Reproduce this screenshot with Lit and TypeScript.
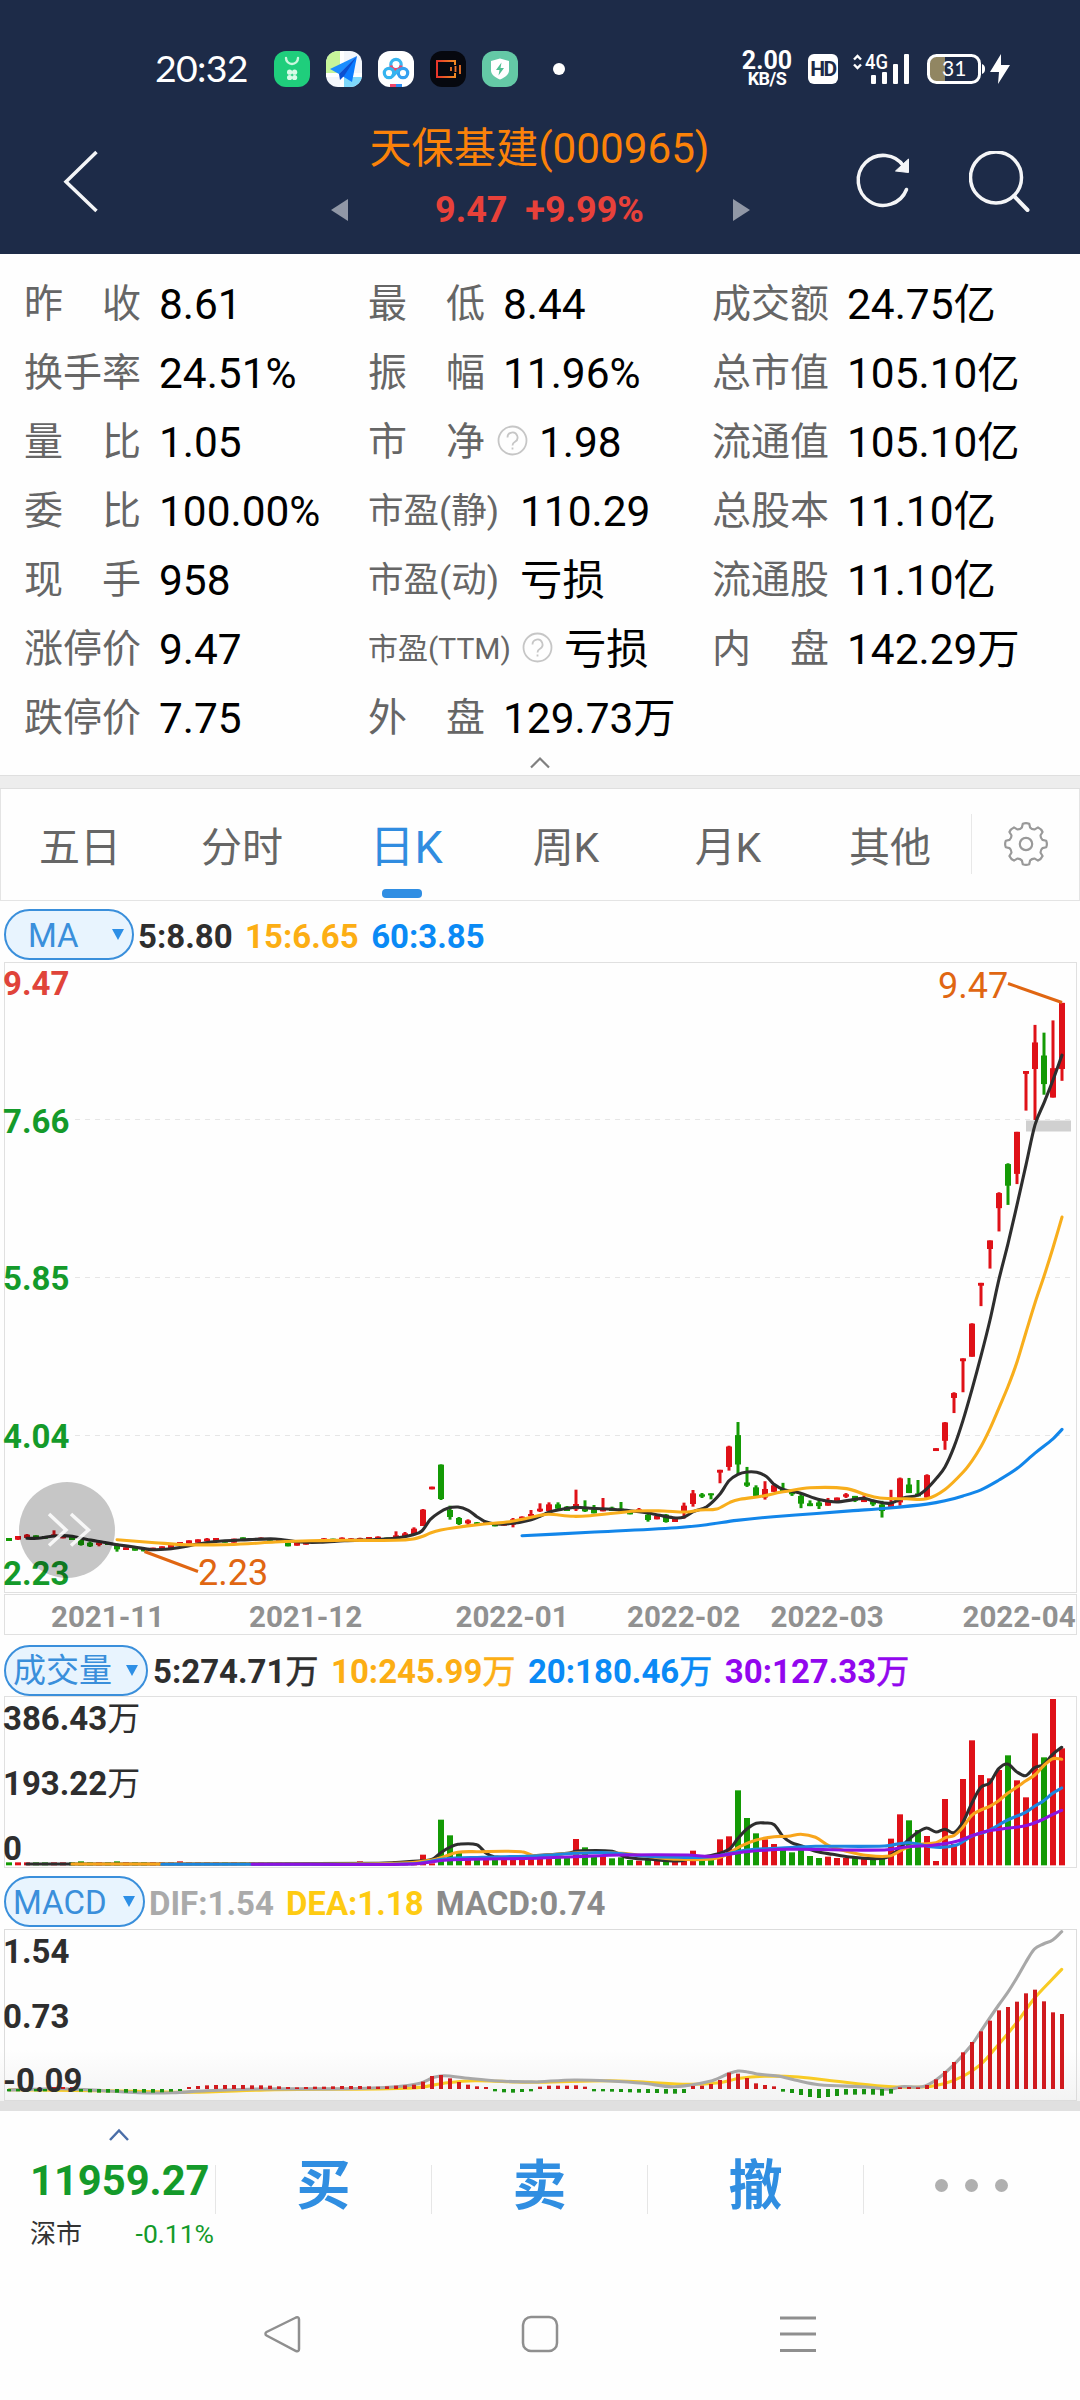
import { LitElement, html, svg, css, nothing } from "lit";
import { customElement, property } from "lit/decorators.js";
import { classMap } from "lit/directives/class-map.js";

type Pt = [number, number];
type Candle = [number, number, number, number, number]; // direction, high, body top, body bottom, low

const UP = "#df1118";
const DOWN = "#149a05";
const X0 = 9;
const STEP = 9;
const xAt = (i: number) => X0 + STEP * i;

/* Maps a run of points from a sub-grid into chart space. */
const grid = (ox: number, oy: number, sx: number, sy: number, pts: number[][]): Pt[] =>
  pts.map(([u, v]) => [ox + u / sx, oy + v / sy]);

const rows = (oy: number, sy: number, list: Candle[]): Candle[] =>
  list.map(([d, ...v]) => [d, ...v.map((n) => oy + n / sy)] as Candle);

const curve = (p: Pt[]): string => {
  let d = `M${p[0][0].toFixed(1)} ${p[0][1].toFixed(1)}`;
  for (let i = 0; i < p.length - 1; i++) {
    const a = p[i - 1] ?? p[i], b = p[i], c = p[i + 1], e = p[i + 2] ?? c;
    const k = (c[0] - b[0]) / 3;
    const mb = i > 0 ? (c[1] - a[1]) / (c[0] - a[0]) : (c[1] - b[1]) / (c[0] - b[0]);
    const mc = e !== c ? (e[1] - b[1]) / (e[0] - b[0]) : (c[1] - b[1]) / (c[0] - b[0]);
    d += `C${(b[0] + k).toFixed(1)} ${(b[1] + mb * k).toFixed(1)} ${(c[0] - k).toFixed(1)} ${(c[1] - mc * k).toFixed(1)} ${c[0].toFixed(1)} ${c[1].toFixed(1)}`;
  }
  return d;
};

const CANDLES: Candle[] = [
  ...rows(1380, 3, [
    [0, 474, 474, 483, 483], [1, 468, 468, 479, 480], [1, 462, 464, 474, 474], [0, 466, 466, 474, 474],
    [0, 468, 468, 476, 476], [1, 451, 463, 471, 471], [1, 467, 467, 475, 475], [0, 470, 470, 480, 480],
    [0, 478, 480, 495, 497], [0, 484, 488, 499, 501], [1, 484, 487, 495, 499], [0, 486, 486, 495, 495],
    [0, 490, 494, 508, 515], [1, 502, 502, 510, 510], [0, 504, 504, 512, 512], [0, 505, 505, 514, 514],
    [1, 503, 503, 510, 510], [1, 499, 499, 507, 507], [1, 495, 495, 504, 504], [1, 486, 486, 496, 496],
    [1, 481, 481, 491, 491], [1, 478, 478, 488, 488], [1, 474, 476, 484, 484], [1, 474, 474, 484, 484],
    [0, 480, 480, 488, 488], [1, 476, 476, 488, 488], [0, 472, 472, 480, 480], [1, 475, 475, 482, 482],
    [1, 472, 473, 480, 480], [0, 475, 475, 482, 482], [1, 477, 477, 484, 484], [0, 486, 488, 499, 499],
    [1, 488, 488, 497, 497], [1, 485, 485, 494, 494], [1, 480, 480, 488, 488], [1, 474, 475, 482, 482],
    [0, 476, 476, 484, 484], [1, 472, 473, 482, 482], [1, 474, 475, 482, 482], [1, 473, 474, 481, 481],
    [1, 471, 471, 480, 480], [1, 469, 470, 478, 478], [0, 473, 473, 481, 481], [1, 454, 466, 476, 476],
    [1, 456, 460, 469, 470], [1, 442, 446, 463, 464], [1, 387, 389, 438, 438], [1, 320, 320, 328, 328],
    [0, 253, 254, 357, 360], [0, 377, 390, 411, 419], [0, 411, 414, 432, 435], [1, 418, 421, 430, 434],
    [0, 426, 427, 437, 437], [1, 424, 425, 433, 433],
  ]),
  ...rows(1440, 3, [
    [0, 250, 252, 259, 259], [1, 248, 250, 257, 257], [1, 234, 238, 254, 262], [1, 229, 230, 240, 242],
    [1, 210, 222, 229, 229], [1, 190, 206, 214, 216], [1, 187, 193, 213, 214], [0, 187, 193, 206, 208],
    [0, 198, 200, 213, 213], [1, 149, 192, 208, 213], [0, 181, 207, 214, 216], [0, 195, 208, 220, 220],
    [1, 174, 208, 214, 214], [0, 200, 203, 213, 213], [0, 186, 206, 214, 214], [0, 210, 213, 223, 223],
    [1, 204, 208, 219, 219], [0, 222, 224, 240, 245], [1, 228, 228, 238, 238], [0, 222, 224, 246, 248],
    [1, 232, 234, 246, 246], [1, 188, 197, 219, 236], [1, 150, 160, 192, 200], [0, 159, 163, 170, 174],
    [0, 160, 160, 166, 178],
  ]),
  ...rows(960, 2.45, [
    [1, 1249, 1249, 1256, 1282], [1, 1190, 1192, 1242, 1251], [0, 1132, 1164, 1236, 1260],
    [0, 1242, 1280, 1288, 1291], [0, 1287, 1292, 1313, 1313], [1, 1277, 1296, 1317, 1322],
    [1, 1285, 1287, 1303, 1303], [0, 1281, 1296, 1303, 1303], [0, 1298, 1303, 1309, 1313],
    [0, 1308, 1313, 1332, 1343], [0, 1324, 1331, 1338, 1338], [0, 1323, 1329, 1338, 1345],
    [1, 1318, 1324, 1337, 1337], [1, 1317, 1317, 1327, 1327], [1, 1306, 1309, 1315, 1318],
    [0, 1313, 1313, 1325, 1328], [1, 1312, 1320, 1328, 1328], [0, 1323, 1326, 1334, 1338],
    [0, 1325, 1334, 1350, 1366], [1, 1298, 1328, 1340, 1341], [1, 1268, 1270, 1329, 1337],
    [0, 1269, 1285, 1306, 1306], [0, 1274, 1307, 1314, 1314], [1, 1260, 1262, 1317, 1320],
    [1, 1196, 1196, 1203, 1203], [1, 1132, 1133, 1178, 1200], [1, 1059, 1061, 1073, 1110],
    [1, 976, 976, 983, 1059], [1, 890, 891, 972, 972], [1, 791, 791, 798, 848],
    [1, 687, 687, 708, 756], [1, 569, 571, 608, 665], [0, 498, 500, 553, 600],
    [1, 421, 421, 524, 549], [1, 272, 272, 279, 369], [1, 159, 202, 267, 392],
    [0, 178, 234, 304, 330], [1, 148, 265, 337, 337], [1, 105, 105, 267, 296],
  ]),
];

const SX = 2.904;

const MA5: Pt[] = [
  ...grid(0, 1380, SX, 3, [[78, 475], [110, 475], [140, 470], [175, 467], [210, 469], [250, 478], [300, 487], [340, 494], [390, 501], [440, 509], [490, 507], [530, 501], [570, 493], [620, 485], [700, 480], [800, 477], [870, 486], [930, 487], [1000, 482], [1080, 479], [1150, 474], [1200, 464], [1225, 453], [1250, 418], [1275, 398], [1300, 385], [1330, 381], [1360, 391], [1385, 410], [1410, 425], [1440, 432], [1490, 430], [1540, 420]]),
  ...grid(490, 1440, 3, 3, [[150, 229], [177, 217], [204, 210], [258, 202], [300, 205], [366, 208], [420, 212], [470, 218], [510, 226], [550, 233], [580, 232], [610, 215], [650, 200], [690, 162], [717, 122], [744, 103], [771, 96], [800, 97], [830, 110]]),
  ...grid(720, 960, 3, 2.45, [[160, 1283], [190, 1297], [240, 1306], [297, 1322], [350, 1328], [400, 1322], [432, 1319], [460, 1325], [510, 1331], [550, 1318], [594, 1311], [621, 1295], [650, 1269], [675, 1242], [702, 1193], [729, 1128], [756, 1052], [783, 970], [810, 882], [837, 782], [864, 695], [891, 600], [918, 502], [945, 404], [972, 350], [999, 294], [1026, 233]]),
];
const MA15: Pt[] = [
  ...grid(0, 1380, SX, 3, [[340, 479], [450, 488], [540, 494], [650, 494], [720, 491], [800, 486], [900, 482], [1000, 481], [1150, 481], [1200, 477], [1230, 468], [1250, 459], [1280, 450], [1320, 443], [1400, 433], [1480, 425], [1530, 415]]),
  ...grid(490, 1440, 3, 3, [[150, 226], [177, 223], [250, 229], [300, 227], [440, 213], [520, 213], [590, 216], [630, 210], [680, 207], [720, 187], [750, 178], [820, 168], [870, 157]]),
  ...grid(720, 960, 3, 2.45, [[190, 1303], [270, 1293], [380, 1295], [440, 1311], [480, 1318], [560, 1320], [620, 1320], [675, 1297], [729, 1255], [756, 1227], [783, 1192], [810, 1148], [837, 1097], [864, 1045], [891, 985], [918, 912], [945, 840], [972, 775], [999, 705], [1026, 630]]),
];
const MA60: Pt[] = [
  ...grid(490, 1440, 3, 3, [[96, 287], [300, 277], [560, 263], [650, 254]]),
  ...grid(720, 960, 3, 2.45, [[50, 1373], [160, 1364], [290, 1356], [400, 1349], [500, 1343], [620, 1333], [675, 1325], [729, 1313], [783, 1298], [837, 1274], [891, 1246], [945, 1208], [999, 1173], [1026, 1150]]),
];

/* Volume bar tops, one per candle; the first 46 sessions are nearly flat. */
const VOLUME: number[] = [
  ...Array.from({ length: 46 }, (_, i) => ([8, 12, 19, 39].includes(i) ? 694 : i > 42 ? 694 : 697)),
  674, 700, 569, 616, 664, 682, 690, 686, 690, 688, 684, 684, 684, 682, 684, 682, 682, 627, 652, 678, 678, 685, 682,
  690, 692, 685, 690, 690, 690, 685, 662, 687, 685, 628, 619, 481, 564, 610, 628, 642, 660, 667, 660, 678, 684, 680,
  684, 684, 684, 684, 684, 684, 626, 553, 571, 600, 618, 693, 507, 642, 447, 331, 435, 445, 420, 376, 451, 502, 310,
  382, 207, 355,
];
const two = (left: number[][], right: number[][]): Pt[] => [
  ...grid(0, 1630, SX, 3, left), ...grid(540, 1630, SX, 3, right),
];
const V5 = two(
  [[78, 702], [500, 702], [1100, 700], [1200, 694], [1255, 688], [1280, 668], [1310, 650], [1330, 643], [1385, 644], [1410, 668], [1435, 680], [1500, 682]],
  [[0, 676], [80, 670], [110, 663], [210, 664], [250, 682], [320, 688], [400, 693], [440, 685], [500, 676], [550, 657], [575, 625], [600, 598], [628, 580], [653, 579], [680, 584], [706, 620], [730, 638], [760, 648], [800, 664], [850, 673], [900, 681], [1000, 684], [1040, 660], [1065, 634], [1090, 612], [1122, 594], [1150, 606], [1176, 598], [1202, 608], [1228, 577], [1254, 520], [1280, 472], [1306, 459], [1332, 416], [1358, 402], [1384, 425], [1410, 437], [1436, 413], [1462, 404], [1489, 373], [1515, 352]]);
const V10 = two(
  [[209, 702], [700, 702], [1150, 700], [1255, 690], [1330, 667], [1385, 665], [1515, 665], [1550, 677]],
  [[20, 676], [110, 668], [240, 670], [320, 680], [400, 688], [500, 687], [540, 675], [580, 650], [628, 630], [680, 620], [720, 619], [757, 613], [800, 622], [840, 648], [890, 664], [940, 675], [1015, 678], [1060, 655], [1100, 643], [1150, 638], [1180, 622], [1202, 617], [1228, 592], [1254, 556], [1280, 540], [1306, 529], [1332, 512], [1358, 490], [1384, 472], [1410, 453], [1436, 436], [1462, 408], [1489, 386], [1515, 388]]);
const V20 = two(
  [[470, 703], [900, 703], [1200, 701], [1290, 687], [1400, 682], [1568, 677]],
  [[100, 670], [200, 668], [300, 678], [400, 682], [500, 680], [600, 660], [700, 654], [800, 649], [1000, 648], [1070, 638], [1150, 652], [1210, 645], [1254, 618], [1300, 603], [1358, 570], [1410, 547], [1436, 529], [1462, 513], [1489, 490], [1515, 474]]);
const V30 = two(
  [[732, 703], [900, 703], [1200, 702], [1300, 690], [1560, 685]],
  [[0, 684], [100, 680], [240, 675], [430, 675], [500, 679], [600, 665], [720, 658], [1000, 660], [1070, 650], [1140, 646], [1210, 634], [1254, 617], [1300, 603], [1340, 597], [1410, 587], [1450, 573], [1489, 553], [1515, 541]]);

/* MACD histogram tips against the zero line at 1377. */
const ZERO = 1377;
const HIST: number[] = [
  1384, 1384, 1384, 1384, 1384, 1371, 1371, 1371, 1385, 1387, 1388, 1388, 1388, 1388, 1388, 1388, 1388, 1387, 1385,
  1383, 1371, 1368, 1366, 1365, 1365, 1365, 1365, 1366, 1366, 1367, 1369, 1371, 1372, 1371, 1370, 1370, 1369, 1368,
  1368, 1368, 1369, 1370, 1369, 1367, 1366, 1364, 1355, 1338, 1335, 1345, 1356, 1364, 1369, 1371, 1384, 1387, 1388,
  1386, 1384, 1370, 1367, 1367, 1367, 1366, 1370, 1384, 1384, 1385, 1386, 1387, 1388, 1389, 1389, 1391, 1391, 1389,
  1368, 1367, 1362, 1350, 1328, 1331, 1344, 1360, 1365, 1369, 1385, 1389, 1395, 1401, 1404, 1401, 1398, 1394, 1394,
  1393, 1394, 1397, 1391, 1372, 1371, 1372, 1365, 1348, 1323, 1296, 1267, 1236, 1204, 1172, 1141, 1131, 1115, 1090,
  1079, 1114, 1147, 1152,
];
const DIF = two(
  [[26, 1380], [180, 1376], [300, 1382], [400, 1388], [500, 1388], [600, 1382], [750, 1377], [1000, 1376], [1150, 1370], [1220, 1360], [1260, 1342], [1290, 1337], [1350, 1344], [1450, 1353], [1560, 1356]],
  [[0, 1355], [100, 1350], [200, 1353], [300, 1360], [390, 1370], [500, 1352], [550, 1330], [575, 1323], [600, 1325], [630, 1332], [690, 1338], [740, 1350], [810, 1364], [950, 1371], [1015, 1378], [1050, 1370], [1110, 1370], [1150, 1350], [1200, 1306], [1254, 1244], [1280, 1204], [1332, 1125], [1358, 1088], [1384, 1045], [1410, 998], [1436, 957], [1462, 942], [1489, 930], [1515, 905]]);
const DEA = two(
  [[26, 1379], [400, 1384], [550, 1387], [800, 1379], [1200, 1374], [1300, 1358], [1380, 1352], [1500, 1356]],
  [[0, 1357], [200, 1352], [300, 1356], [430, 1363], [520, 1358], [580, 1345], [650, 1339], [740, 1340], [830, 1350], [1000, 1369], [1110, 1371], [1170, 1362], [1230, 1338], [1280, 1303], [1320, 1258], [1384, 1178], [1436, 1105], [1489, 1046], [1515, 1018]]);

const line = (p: Pt[], stroke: string) =>
  svg`<path d=${curve(p)} fill="none" stroke=${stroke} stroke-width="3.1" stroke-linecap="round" stroke-linejoin="round"/>`;

interface Stat { label: string; value: string; size?: "mid" | "small"; help?: boolean }

const STATS: (Stat | null)[] = [
  { label: "昨　收", value: "8.61" }, { label: "最　低", value: "8.44" }, { label: "成交额", value: "24.75亿" },
  { label: "换手率", value: "24.51%" }, { label: "振　幅", value: "11.96%" }, { label: "总市值", value: "105.10亿" },
  { label: "量　比", value: "1.05" }, { label: "市　净", value: "1.98", help: true }, { label: "流通值", value: "105.10亿" },
  { label: "委　比", value: "100.00%" }, { label: "市盈(静)", value: "110.29", size: "mid" }, { label: "总股本", value: "11.10亿" },
  { label: "现　手", value: "958" }, { label: "市盈(动)", value: "亏损", size: "mid" }, { label: "流通股", value: "11.10亿" },
  { label: "涨停价", value: "9.47" }, { label: "市盈(TTM)", value: "亏损", size: "small", help: true }, { label: "内　盘", value: "142.29万" },
  { label: "跌停价", value: "7.75" }, { label: "外　盘", value: "129.73万" }, null,
];

const FONT = css`Roboto, "Noto Sans CJK SC", sans-serif`;

@customElement("status-bar")
class StatusBar extends LitElement {
  static styles = css`
    :host { display: flex; align-items: center; height: 36px; padding: 51px 69px 0 155px; color: #fff; font-family: Lato, sans-serif; }
    .time { width: 119px; font-size: 37.500px; line-height: 34px; padding-bottom: 2px; white-space: nowrap; letter-spacing: -0.700px; }
    .apps { display: flex; gap: 16px; }
    .dot { width: 12px; height: 12px; border-radius: 50%; background: #fff; margin-left: 35px; }
    .speed { margin-left: auto; width: 54px; text-align: center; font-family: Roboto, sans-serif; font-weight: 700; }
    .rate { font-size: 25px; line-height: 19px; }
    .unit { font-size: 18px; line-height: 17px; letter-spacing: -0.500px; }
    .hd { width: 30px; height: 30px; border-radius: 6px; background: #fff; color: #1d2b48; margin-left: 14px; display: flex; align-items: center; justify-content: center; font: 700 21px/30px Roboto, sans-serif; letter-spacing: -1.500px; }
    .signal { margin-left: 14px; overflow: visible; }
    .battery { margin-left: 16px; overflow: visible; }
    svg { display: block; }
  `;
  render() {
    return html`
      <span class="time">20:32</span>
      <div class="apps">
        <svg width="36" height="36" viewBox="0 0 36 36"><rect width="36" height="36" rx="12" fill="#1fce7c"/><path d="M12 7a6 6 0 0 0 12 0" fill="none" stroke="#c9f7de" stroke-width="2.4" stroke-linecap="round"/><g fill="#d8fbe8"><circle cx="15.6" cy="21.2" r="2.6"/><circle cx="20.6" cy="21.2" r="2.6"/><circle cx="15.6" cy="26.5" r="2.6"/><circle cx="20.6" cy="26.5" r="2.6"/></g></svg>
        <svg width="36" height="36" viewBox="0 0 36 36"><defs><clipPath id="m"><rect width="36" height="36" rx="12"/></clipPath></defs><g clip-path="url(#m)"><rect width="36" height="36" fill="#f3f6fb"/><path d="M0 0h14v22H0z" fill="#c6f59a"/><path d="M18 26h18v10H18z" fill="#7ed8fb"/><path d="M14 0h4v36h-4zM0 22h36v4H0z" fill="#fff"/></g><path d="M31 5 4 18l9 5z" fill="#1b8dff"/><path d="M31 5 13 23l13 8z" fill="#0a7bff"/><path d="M31 5 13 23l1 6 4-4z" fill="#0b4fd0"/></svg>
        <svg width="36" height="36" viewBox="0 0 36 36"><rect width="36" height="36" rx="12" fill="#fff"/><g fill="none" stroke-width="3.2"><circle cx="18" cy="13.5" r="5.2" stroke="#39b6f0"/><path d="M12.9 14.5a5.2 5.2 0 0 0 10.200 0" stroke="#f0466a"/><circle cx="11" cy="22" r="4.700" stroke="#35b4ef"/><circle cx="25" cy="22" r="4.700" stroke="#35a0f0"/><path d="M14.500 25 21 18.500" stroke="#35b4ef"/></g><path d="M12 33h6v3h-6z" fill="#f2466b"/><path d="M18 33h6v3h-6z" fill="#2b8cf0"/></svg>
        <svg width="36" height="36" viewBox="0 0 36 36"><defs><linearGradient id="o"><stop stop-color="#e8352b"/><stop offset="1" stop-color="#f08a22"/></linearGradient></defs><rect width="36" height="36" rx="12" fill="#06080f"/><path d="M25 14v-4H7v16h18v-4" fill="none" stroke="url(#o)" stroke-width="2"/><path d="M21 16v4M25.500 15v6M30 14v9" stroke="#f0742a" stroke-width="1.800"/></svg>
        <svg width="36" height="36" viewBox="0 0 36 36"><rect width="36" height="36" rx="12" fill="#64c9a6"/><path d="M18 7.500 27 10v9.500c0 4-4 7-9 9-5-2-9-5-9-9V10z" fill="#fff"/><path d="M19.500 11.500 14 19h3.500l-1 5.500L22 17h-3.500z" fill="#4fc093"/></svg>
      </div>
      <span class="dot"></span>
      <div class="speed"><div class="rate">2.00</div><div class="unit">KB/S</div></div>
      <span class="hd">HD</span>
      <svg class="signal" width="59" height="30" viewBox="0 0 59 30">
        <path d="M2 5.500 5.500 2 9 5.500M2 10.500 5.500 14 9 10.500" fill="none" stroke="#fff" stroke-width="2.400"/>
        <text x="13" y="15" textLength="23" lengthAdjust="spacingAndGlyphs" font-family="Roboto" font-size="20" font-weight="500" fill="#fff">4G</text>
        <g fill="#fff"><rect x="19" y="21" width="5" height="9" rx="1"/><rect x="30" y="18" width="5" height="12" rx="1"/><rect x="41" y="10" width="5" height="20" rx="1"/><rect x="52" y="0" width="5" height="30" rx="1"/></g>
      </svg>
      <svg class="battery" width="84" height="30" viewBox="0 0 84 30">
        <path d="M9 2.500H18V27.500H9a6 6 0 0 1-6-6v-13a6 6 0 0 1 6-6z" fill="#918662"/>
        <rect x="1.500" y="1.500" width="51" height="27" rx="8" fill="none" stroke="#fff" stroke-width="3"/>
        <path d="M55 10c2 1 3 2 3 5s-1 4-3 5z" fill="#fff"/>
        <text x="15" y="22" font-family="Lato" font-weight="400" font-size="21" fill="#fff">31</text>
        <path d="M74 0 63 18h9l-1 12 12-19h-9z" fill="#fff"/>
      </svg>`;
  }
}

@customElement("indicator-pill")
class IndicatorPill extends LitElement {
  @property() name = "";
  static styles = css`
    :host { display: flex; align-items: center; justify-content: space-between; box-sizing: border-box; height: 51px; border: 2.500px solid #3a8fdb; border-radius: 26px; background: #e8f4fe; color: #3a8fdb; font: 400 33px/46px ${FONT}; padding: 0 8px 0 7px; white-space: nowrap; }
    .text { padding-top: 2px; }
    .tri { width: 0; height: 0; border: 6.500px solid transparent; border-top: 11px solid #2d8fe6; border-bottom: 0; }
  `;
  render() { return html`<span class="text">${this.name}</span><span class="tri"></span>`; }
}

@customElement("app-root")
class AppRoot extends LitElement {
  static styles = css`
    :host { display: block; width: 1080px; height: 2400px; overflow: hidden; background: #fefefe; font-family: ${FONT}; color: #000; }
    svg { display: block; }
    .header { height: 254px; background: #1d2b48; }
    .title-bar { display: grid; grid-template-columns: 331px 419px 330px; height: 167px; }
    .back { padding: 63px 0 0 63px; }
    .name { text-align: center; color: #fb8209; font-size: 42.200px; line-height: 50px; padding: 37px 2px 0 0; margin-bottom: -1px; white-space: nowrap; }
    .quote { display: flex; align-items: center; justify-content: space-between; padding-top: 16px; height: 42px; padding-bottom: 6px; }
    .price { color: #e8413a; font-weight: 700; font-size: 36px; white-space: pre; padding-right: 2px; }
    .actions { display: flex; padding: 64px 0 0 105px; gap: 58px; }
    .stats { height: 483px; padding-top: 16px; display: grid; grid-template-columns: 344px 344px auto; grid-auto-rows: 69px; padding-left: 24px; }
    .stat { display: flex; align-items: center; white-space: nowrap; font-size: 42.400px; line-height: 50px; }
    .label { color: #666; font-size: 39px; width: 117px; margin-right: 18px; padding-bottom: 1px; }
    .label.mid { font-size: 35.500px; width: 134px; }
    .label.small { font-size: 30px; width: auto; margin-right: 11px; }
    .label.helped { margin-right: 12px; }
    .help { margin: -5px 11px 0 0; }
    .collapse { height: 22px; display: flex; justify-content: center; padding-top: 3px; box-sizing: border-box; }
    .band { height: 14px; box-sizing: border-box; background: #ededed; border: solid #dfdfdf; border-width: 1px 0; }
    .tabs { display: flex; height: 112px; box-sizing: border-box; border: 1px solid #e4e4e4; border-top: 0; }
    .tab { width: 162px; font-size: 41px; color: #666; display: flex; flex-direction: column; align-items: center; line-height: 50px; padding: 34px 4px 0 0; box-sizing: border-box; }
    .tab.active { color: #308ce0; font-size: 45px; padding-right: 0; }
    .mark { width: 40px; height: 9px; border-radius: 4px; background: #308ee3; margin: 16px 9px 0 0; }
    .settings { width: 107px; margin-left: -2px; border-left: 1px solid #e8e8e8; height: 60px; margin-top: 25px; display: flex; align-items: center; justify-content: center; }
    .legend { display: flex; align-items: center; padding: 8px 0 0 4px; height: 53px; box-sizing: border-box; font-weight: 700; font-size: 33px; line-height: 40px; white-space: nowrap; }
    .legend.ma { height: 61px; padding-bottom: 2px; }
    .legend.vol { height: 60px; }
    .legend.macd { height: 61px; padding-bottom: 2px; }
    .ma indicator-pill { width: 130px; padding-left: 22px; }
    .vol indicator-pill { width: 144px; }
    .macd indicator-pill { width: 141px; }
    .items { display: flex; gap: 12.500px; margin-left: 5px; padding-top: 4px; }
    .ma .items { margin-left: 4px; }
    .macd .items { margin-left: 4px; gap: 12px; }
    .wan { font-weight: 400; -webkit-text-stroke: 0.600px currentColor; }
    .k { color: #2e2e2e; } .o { color: #fcae14; } .b { color: #0a8af5; } .p { color: #9207ee; }
    .g { color: #aaa; } .y { color: #fecb12; } .d { color: #8b8b8b; }
    .axis { font: 700 33px ${FONT}; }
    .date { font: 700 29.500px ${FONT}; fill: #919191; }
    .note { font: 400 36px ${FONT}; fill: #e06612; }
    .divider { height: 10px; background: #e0e0e0; }
    .trade { display: grid; grid-template-columns: 215px repeat(4, 216px); height: 149px; }
    .index { padding-left: 30px; display: flex; flex-direction: column; }
    .fold { padding: 17px 0 0 78px; height: 13px; }
    .points { color: #149a2a; font-weight: 700; font-size: 41.700px; line-height: 50px; margin-top: 15px; }
    .market { display: flex; justify-content: space-between; font-size: 26px; line-height: 36px; margin-top: 10px; padding-right: 1px; color: #333; }
    .change { color: #149a2a; font-size: 26.500px; }
    .action { display: flex; align-items: center; justify-content: center; height: 49px; margin-top: 54px; border-left: 1px solid #e6e6e6; box-sizing: border-box; color: #308ee1; font-weight: 700; font-size: 54px; line-height: 60px; gap: 17px; padding-bottom: 6px; }
    .more { padding: 0 0 9px; }
    .pip { width: 13px; height: 13px; border-radius: 50%; background: #b0b0b0; }
    .nav { display: grid; grid-template-columns: 258px 258px 258px; padding-left: 153px; height: 140px; }
    .nav svg { justify-self: center; margin-top: 55px; }
  `;

  private stat(s: Stat | null) {
    if (!s) return nothing;
    const cls = { label: true, mid: s.size === "mid", small: s.size === "small", helped: !!s.help && !s.size };
    return html`<div class="stat"><span class=${classMap(cls)}>${s.label}</span>
      ${s.help ? html`<svg class="help" width="31" height="31" viewBox="0 0 31 31" fill="none" stroke="#c6c6c6" stroke-width="1.800"><circle cx="15.500" cy="15.500" r="14"/><path d="M10.500 12.500a5 5 0 1 1 7.500 4.300c-1.800 1-2.500 1.800-2.500 3.700M15.500 22.500v2"/></svg>` : nothing}<span>${s.value}</span></div>`;
  }

  private axis(y: number, text: string, fill: string, wan = false) {
    return svg`<text class="axis" x="3" y=${y} fill=${fill}>${text}${wan ? svg`<tspan class="wan">万</tspan>` : nothing}</text>`;
  }

  private priceChart() {
    const dates: [number, string][] = [[51, "2021-11"], [249, "2021-12"], [455.5, "2022-01"], [627, "2022-02"], [770.5, "2022-03"], [962.5, "2022-04"]];
    return html`<svg width="1080" height="674" viewBox="0 962 1080 674">
      <g fill="none" stroke="#e0e0e0"><rect x="4.500" y="962.500" width="1072" height="630"/><rect x="4.500" y="1594.500" width="1072" height="40"/></g>
      <path d="M75 1119.500H1070M75 1277.500H1070M75 1435.500H1070" stroke="#e6e6e6" stroke-dasharray="5 5"/>
      <rect x="1026" y="1120.500" width="45" height="11" fill="#d0d0d0"/>
      ${CANDLES.map(([d, h, t, b, l], i) => svg`<g fill=${d ? UP : DOWN}><rect x=${xAt(i) - 1.5} y=${h} width="3" height=${Math.max(l - h, 1)}/><rect x=${xAt(i) - 3} y=${t} width="6" height=${b - t}/></g>`)}
      ${line(MA5, "#2e2e2e")}${line(MA15, "#f8ae1c")}${line(MA60, "#1286ea")}
      <path d="M1008 983.500 1062 1002.500M144.500 1551.500 198 1571.500" stroke="#e06612" stroke-width="3"/>
      <text class="note" x="938" y="997.500">9.47</text><text class="note" x="198" y="1584.500">2.23</text>
      ${this.axis(995, "9.47", "#e0443a")}${this.axis(1132.5, "7.66", "#149a2a")}${this.axis(1290, "5.85", "#149a2a")}
      ${this.axis(1448, "4.04", "#149a2a")}${this.axis(1584.5, "2.23", "#149a2a")}
      ${dates.map(([x, t]) => svg`<text class="date" x=${x} y="1626.500">${t}</text>`)}
      <circle cx="67" cy="1530" r="48" fill="#000" fill-opacity="0.220"/>
      <path d="M49 1514 66 1530 49 1545.500M71 1514 88.500 1530 71 1545.500" fill="none" stroke="#fff" stroke-opacity="0.850" stroke-width="3.500"/>
    </svg>`;
  }

  private volumeChart() {
    return html`<svg width="1080" height="172" viewBox="0 1696 1080 172">
      <rect x="4.500" y="1696.500" width="1072" height="171" fill="none" stroke="#e0e0e0"/>
      ${VOLUME.map((v, i) => svg`<rect x=${xAt(i) - 3} y=${1630 + v / 3} width="6" height=${(706 - v) / 3} fill=${CANDLES[i][0] ? UP : DOWN}/>`)}
      ${line(V5, "#2e2e2e")}${line(V10, "#f8a51c")}${line(V20, "#1c86e0")}${line(V30, "#8c12e0")}
      ${this.axis(1730, "386.43", "#2e2e2e", true)}${this.axis(1795, "193.22", "#2e2e2e", true)}${this.axis(1859.5, "0", "#2e2e2e")}
    </svg>`;
  }

  private macdChart() {
    return html`<svg width="1080" height="172" viewBox="0 1929 1080 172">
      <defs><linearGradient id="shade" x2="0" y2="1"><stop stop-color="#fefefe"/><stop offset="1" stop-color="#f3f3f3"/></linearGradient></defs>
      <rect y="2050" width="1080" height="51" fill="url(#shade)"/>
      <rect x="4.500" y="1929.500" width="1072" height="171" fill="none" stroke="#dcdcdc"/>
      ${line(DEA, "#f8cb24")}${line(DIF, "#a8a8a8")}
      ${HIST.map((v, i) => svg`<rect x=${xAt(i) - 2} y=${1630 + Math.min(v, ZERO) / 3} width="4" height=${Math.abs(v - ZERO) / 3} fill=${v < ZERO ? "#d01a1e" : "#179210"}/>`)}
      ${this.axis(1962.5, "1.54", "#2e2e2e")}${this.axis(2027.5, "0.73", "#2e2e2e")}${this.axis(2091.5, "-0.09", "#2e2e2e")}
    </svg>`;
  }

  private gear() {
    const d: string[] = [];
    for (let i = 0; i < 8; i++) {
      const p = (r: number, a: number) => {
        const t = ((i * 45 + a - 90) * Math.PI) / 180;
        return `${(22 + r * Math.cos(t)).toFixed(2)} ${(22 + r * Math.sin(t)).toFixed(2)}`;
      };
      d.push(`${i ? "L" : "M"}${p(17, -14)}L${p(20.5, -9)}Q${p(21.5, 0)} ${p(20.5, 9)}L${p(17, 14)}Q${p(15.5, 22.5)} ${p(17, 31)}`);
    }
    return html`<svg width="44" height="44" viewBox="0 0 44 44" fill="none" stroke="#999" stroke-width="2.200" stroke-linejoin="round"><path d="${d.join("")}Z"/><circle cx="22" cy="22" r="6.200"/></svg>`;
  }

  render() {
    const wan = html`<span class="wan">万</span>`;
    return html`
      <div class="header">
        <status-bar></status-bar>
        <div class="title-bar">
          <div class="back"><svg width="36" height="64" viewBox="0 0 36 64"><path d="M33.500 2 3 31.700 33.500 61" fill="none" stroke="#f4f5f7" stroke-width="3.500"/></svg></div>
          <div>
            <div class="name">天保基建(000965)</div>
            <div class="quote">
              <svg width="17" height="22"><path d="M17 0v22L0 11z" fill="#9097a6"/></svg>
              <span class="price">9.47  +9.99%</span>
              <svg width="17" height="22"><path d="M0 0v22l17-11z" fill="#9097a6"/></svg>
            </div>
          </div>
          <div class="actions">
            <svg width="56" height="64" viewBox="855 151 56 64"><path d="M906.500 189.500A25 25 0 1 1 904 166.500" fill="none" stroke="#f4f5f7" stroke-width="3.500" stroke-linecap="round"/><path d="M908.500 159v13.500l-13-1.500z" fill="#f4f5f7" stroke="#f4f5f7" stroke-linejoin="round"/></svg>
            <svg width="62" height="64" viewBox="969 151 62 64" fill="none" stroke="#f4f5f7" stroke-width="3.500" stroke-linecap="round"><circle cx="996" cy="177.500" r="25.500"/><path d="m1014 196 13.500 14" stroke-width="4"/></svg>
          </div>
        </div>
      </div>
      <div class="stats">${STATS.map((s) => this.stat(s))}</div>
      <div class="collapse"><svg width="22" height="14" viewBox="0 0 22 14"><path d="M2 11.500 11 2.500 20 11.500" fill="none" stroke="#808080" stroke-width="2.200"/></svg></div>
      <div class="band"></div>
      <div class="tabs">
        ${["五日", "分时", "日K", "周K", "月K", "其他"].map((t) => html`<div class=${classMap({ tab: true, active: t === "日K" })}>${t}${t === "日K" ? html`<span class="mark"></span>` : nothing}</div>`)}
        <div class="settings">${this.gear()}</div>
      </div>
      <div class="legend ma"><indicator-pill name="MA"></indicator-pill>
        <div class="items"><span class="k">5:8.80</span><span class="o">15:6.65</span><span class="b">60:3.85</span></div></div>
      ${this.priceChart()}
      <div class="legend vol"><indicator-pill name="成交量"></indicator-pill>
        <div class="items"><span class="k">5:274.71${wan}</span><span class="o">10:245.99${wan}</span><span class="b">20:180.46${wan}</span><span class="p">30:127.33${wan}</span></div></div>
      ${this.volumeChart()}
      <div class="legend macd"><indicator-pill name="MACD"></indicator-pill>
        <div class="items"><span class="g">DIF:1.54</span><span class="y">DEA:1.18</span><span class="d">MACD:0.74</span></div></div>
      ${this.macdChart()}
      <div class="divider"></div>
      <div class="trade">
        <div class="index">
          <div class="fold"><svg width="22" height="14" viewBox="0 0 22 14"><path d="M2 12 11 2.500 20 12" fill="none" stroke="#4a6ea8" stroke-width="2.500"/></svg></div>
          <div class="points">11959.27</div>
          <div class="market"><span>深市</span><span class="change">-0.11%</span></div>
        </div>
        <div class="action">买</div><div class="action">卖</div><div class="action">撤</div>
        <div class="action more"><span class="pip"></span><span class="pip"></span><span class="pip"></span></div>
      </div>
      <div class="nav">
        <svg width="38" height="38" viewBox="0 0 38 38" fill="none" stroke="#8f8f8f" stroke-width="2.500"><path d="M33 2.500 3.500 17a2 2 0 0 0 0 3.500L33 36q3 1 3-2V4.500q0-3-3-2z"/></svg>
        <svg width="38" height="38" viewBox="0 0 38 38" fill="none" stroke="#8f8f8f" stroke-width="2.500"><rect x="2" y="2" width="34" height="34" rx="8"/></svg>
        <svg width="38" height="38" viewBox="0 0 38 38" stroke="#8f8f8f" stroke-width="3"><path d="M1 3h36M1 19h36M1 35.500h36"/></svg>
      </div>`;
  }
}
